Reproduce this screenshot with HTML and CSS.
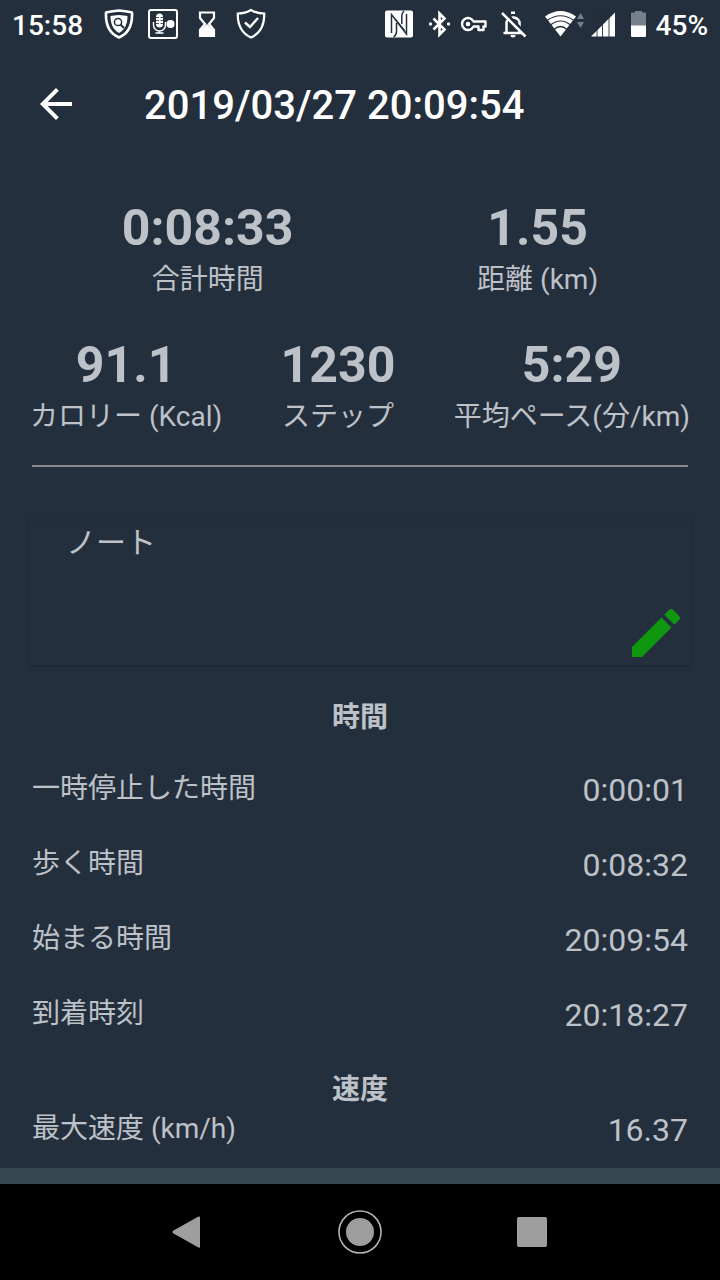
FILE: index.html
```html
<!DOCTYPE html>
<html lang="ja">
<head>
 <meta charset="UTF-8">
 <meta name="viewport" content="width=device-width, initial-scale=1.0">
 <title>2019/03/27 20:09:54</title>
 <link rel="stylesheet" href="styles.css">
</head>
<body>

 <div class="statusbar">
  <span class="clock">15:58</span>
  <div class="notifications">
   <!-- shield with magnifier -->
   <svg width="30" height="32" viewBox="0 0 30 32">
    <path d="M15 2.500C10.500 3 6 3.500 2 4.500C1.500 15 4 25 15 29.500C26 25 28.500 15 28 4.500C24 3.500 19.500 3 15 2.500Z" fill="none" stroke="#fff" stroke-width="2.600" stroke-linejoin="round"/>
    <path d="M15 7C11.500 7.200 9 7.500 6.500 8C6.500 15 8.500 21.500 15 25C21.500 21.500 23.500 15 23.500 8C21 7.500 18.500 7.200 15 7Z" fill="#fff"/>
    <circle cx="14" cy="14" r="3.600" fill="none" stroke="#242f3d" stroke-width="1.500"/>
    <path d="M16.500 16.500L20 20" stroke="#242f3d" stroke-width="2"/>
   </svg>
   <!-- voice recorder -->
   <svg width="30" height="32" viewBox="0 0 30 32">
    <rect x="1" y="2" width="28" height="28" rx="2" fill="none" stroke="#fff" stroke-width="2"/>
    <rect x="8" y="5.500" width="7" height="14" rx="3.500" fill="#fff"/>
    <path d="M8 9.500h3M8 12.500h3M8 15.500h3M12.500 9.500h3M12.500 12.500h3M12.500 15.500h3" stroke="#242f3d" stroke-width="0.800"/>
    <path d="M5.500 14v3a6 6 0 0 0 12 0v-3M11.500 22.500v2.500M7.500 25h8" fill="none" stroke="#fff" stroke-width="1.400"/>
    <circle cx="22.500" cy="16" r="4" fill="#fff"/>
   </svg>
   <!-- hourglass -->
   <svg width="30" height="32" viewBox="0 0 30 32">
    <path d="M8 4.500H22V10L17 16L22 22V28H8V22L13 16L8 10Z" fill="none" stroke="#fff" stroke-width="2.200"/>
    <path d="M15 16L22 22.500V28H8V22.500Z" fill="#fff"/>
   </svg>
   <!-- shield with tick -->
   <svg width="30" height="32" viewBox="0 0 30 32">
    <path d="M15 2C11 4.500 6 5.500 1.800 5.500C1.500 16 5 25 15 29.500C25 25 28.500 16 28.200 5.500C24 5.500 19 4.500 15 2Z" fill="none" stroke="#fff" stroke-width="2.200"/>
    <path d="M9 14.500L14 19L22 10" fill="none" stroke="#fff" stroke-width="2.400"/>
   </svg>
  </div>
  <div class="system">
   <!-- nfc -->
   <svg width="34" height="32" viewBox="0 0 34 32">
    <rect x="1" y="2.500" width="28" height="27" rx="2" fill="#fff"/>
    <path d="M7.500 25V6.500L20.500 22.500M20 3Q17.800 5 17.800 8V16M22.500 6V26L10.500 10.500M9.500 29Q12.500 27 12.500 24V15" fill="none" stroke="#242f3d" stroke-width="1.500"/>
   </svg>
   <!-- bluetooth -->
   <svg width="28" height="32" viewBox="0 0 28 32">
    <path d="M9.500 10.500L20.500 21.500L15.500 26.500V5.500L20.500 10.500L9.500 21.500" fill="none" stroke="#fff" stroke-width="2.600"/>
    <circle cx="6.500" cy="16" r="1.700" fill="#fff"/>
    <circle cx="24.500" cy="16" r="1.700" fill="#fff"/>
   </svg>
   <!-- vpn key -->
   <svg width="34" height="32" viewBox="0 0 34 32">
    <path d="M15.500 13.500H27.500V18.500H25.500V22H20.500V18.500H15.500A6 6 0 1 1 15.500 13.500Z" fill="none" stroke="#fff" stroke-width="2.400" stroke-linejoin="round"/>
    <circle cx="10" cy="16" r="2.300" fill="#fff"/>
   </svg>
   <!-- bell off -->
   <svg width="40" height="32" viewBox="0 0 40 32">
    <path d="M8.500 24.500V14A7 7 0 0 1 21.500 14V24.500M5.500 25H24.500" fill="none" stroke="#fff" stroke-width="2.500"/>
    <path d="M13 6V3.500h4V6ZM12.500 27h5a2.500 2.500 0 0 1-5 0Z" fill="#fff"/>
    <path d="M6 3L30 28" stroke="#242f3d" stroke-width="2.600"/>
    <path d="M4 5L27.500 28.500" stroke="#fff" stroke-width="2.500"/>
   </svg>
   <!-- wifi -->
   <svg width="40" height="32" viewBox="0 0 40 32">
    <path d="M1 8.500Q16.500-2.500 32 8.500L16.500 28.500Z" fill="#fff"/>
    <path d="M3 12.500Q16.500 3 30 12.500M6.500 17Q16.500 9 26.500 17M10 21.500Q16.500 15.500 23 21.500" fill="none" stroke="#242f3d" stroke-width="1.200"/>
    <path d="M33 11L36.500 5L40 11ZM33 14L36.500 20L40 14Z" fill="#75808b"/>
   </svg>
   <!-- mobile signal -->
   <svg width="34" height="32" viewBox="0 0 34 32">
    <path d="M1 28.500L25 4.500V28.500Z" fill="#fff"/>
    <path d="M7 4V30M12.500 4V30M19 4V30" stroke="#242f3d" stroke-width="0.900"/>
   </svg>
   <!-- battery -->
   <svg width="20" height="32" viewBox="0 0 20 32">
    <path d="M1 18V5.500Q1 4.500 2 4.500H5V3H12V4.500H15Q16 4.500 16 5.500V18Z" fill="#75808b"/>
    <path d="M1 17.500H16V28Q16 29 15 29H2Q1 29 1 28Z" fill="#fff"/>
   </svg>
   <span class="percent">45%</span>
  </div>
 </div>

 <header class="appbar">
  <button class="back" type="button" aria-label="戻る">
   <svg width="48" height="48" viewBox="0 0 24 24">
    <path d="M20 11H7.830l5.590-5.590L12 4l-8 8 8 8 1.410-1.410L7.830 13H20v-2z" fill="#fff"/>
   </svg>
  </button>
  <h1 class="title">2019/03/27 20:09:54</h1>
 </header>

 <main class="content">
  <section class="summary">
   <div class="stats stats-wide">
    <div class="stat"><strong>0:08:33</strong><span>合計時間</span></div>
    <div class="stat"><strong>1.55</strong><span>距離 (km)</span></div>
   </div>
   <div class="stats">
    <div class="stat"><strong>91.1</strong><span>カロリー (Kcal)</span></div>
    <div class="stat"><strong>1230</strong><span>ステップ</span></div>
    <div class="stat"><strong>5:29</strong><span>平均ペース(分/km)</span></div>
   </div>
  </section>

  <hr class="divider">

  <section class="note">
   <span class="note-text">ノート</span>
   <button class="edit" type="button" aria-label="ノートを編集">
    <svg width="64" height="64" viewBox="0 0 24 24">
     <path d="M3 17.250V21h3.750L17.810 9.940l-3.750-3.750L3 17.250zM20.710 7.040c.390-.390.390-1.020 0-1.410l-2.340-2.340c-.390-.390-1.020-.390-1.410 0l-1.830 1.830 3.750 3.750 1.830-1.830z" fill="#109710"/>
    </svg>
   </button>
  </section>

  <section class="details">
   <h2 class="heading">時間</h2>
   <dl class="rows">
    <div class="row"><dt>一時停止した時間</dt><dd>0:00:01</dd></div>
    <div class="row"><dt>歩く時間</dt><dd>0:08:32</dd></div>
    <div class="row"><dt>始まる時間</dt><dd>20:09:54</dd></div>
    <div class="row"><dt>到着時刻</dt><dd>20:18:27</dd></div>
   </dl>
  </section>

  <section class="details details-speed">
   <h2 class="heading">速度</h2>
   <dl class="rows">
    <div class="row"><dt>最大速度 (km/h)</dt><dd>16.37</dd></div>
   </dl>
  </section>
 </main>

 <div class="strip"></div>

 <nav class="navbar">
  <button type="button" aria-label="戻る">
   <svg width="48" height="48" viewBox="0 0 48 48">
    <path d="M36 9.500V38.500Q36 40.500 34.500 39.500L9.500 25.500Q7.500 24 9.500 22.500L34.500 8.500Q36 8 36 9.500Z" fill="#9e9e9e"/>
   </svg>
  </button>
  <button type="button" aria-label="ホーム">
   <svg width="48" height="48" viewBox="0 0 48 48">
    <circle cx="24" cy="24" r="21" fill="none" stroke="#b4b4b4" stroke-width="1.600"/>
    <circle cx="24" cy="24" r="14" fill="#9e9e9e"/>
   </svg>
  </button>
  <button type="button" aria-label="履歴">
   <svg width="48" height="48" viewBox="0 0 48 48">
    <rect x="9" y="9" width="30" height="30" rx="2" fill="#9e9e9e"/>
   </svg>
  </button>
 </nav>

</body>
</html>
```
FILE: styles.css
```css
* {
 box-sizing: border-box;
}

body {
 display: flex;
 flex-direction: column;
 min-height: 100vh;
 margin: 0;
 background-color: #242f3d;
 color: #bdc1c8;
 font-family: Roboto, "Noto Sans CJK JP", sans-serif;
 font-size: 28px;
 line-height: 34px;
}

svg {
 display: block;
}

button {
 padding: 0;
 border: none;
 background: none;
 cursor: pointer;
}

.statusbar {
 display: flex;
 align-items: center;
 height: 48px;
 padding: 0 12px;
 color: white;
 font-weight: 500;
}

.clock,
.percent {
 padding-top: 3px;
}

.notifications {
 display: flex;
 gap: 14px;
 margin-left: 21px;
}

.system {
 display: flex;
 align-items: center;
 gap: 6px;
 margin-left: auto;
}

.appbar {
 display: flex;
 align-items: center;
 gap: 64px;
 height: 112px;
 padding: 0 32px;
}

.title {
 margin: 0;
 padding-top: 4px;
 color: white;
 font-size: 40px;
 font-weight: 500;
 line-height: 48px;
}

.content {
 flex: 1;
 padding: 36px 30px 15px;
}

.summary {
 display: flex;
 flex-direction: column;
 gap: 36px;
}

.stats {
 display: flex;
 justify-content: space-between;
}

.stats-wide {
 justify-content: space-around;
}

.stat {
 display: flex;
 flex-direction: column;
 align-items: center;
 gap: 3px;
}

.stat strong {
 font-size: 50px;
 font-weight: 700;
 line-height: 64px;
}

.divider {
 height: 2px;
 margin: 31px 2px 54px;
 border: none;
 background-color: #868a92;
}

.note {
 display: flex;
 justify-content: space-between;
 min-height: 144px;
 padding: 5px 2px 0 36px;
 box-shadow: 0 1px 3px #1b2532;
}

.note-text {
 font-size: 30px;
}

.edit {
 align-self: flex-end;
}

.heading {
 margin: 0;
 font-size: 28px;
 font-weight: 700;
 text-align: center;
}

.details {
 margin: 36px 2px 0;
}

.rows {
 display: flex;
 flex-direction: column;
 gap: 39px;
 margin: 37px 0 0;
}

.row {
 display: flex;
 justify-content: space-between;
}

.row dd {
 margin: 0;
 font-size: 32px;
 line-height: 36px;
}

.details-speed {
 margin-top: 40px;
}

.details-speed .rows {
 margin-top: 5px;
}

.strip {
 height: 16px;
 background-color: #37474f;
}

.navbar {
 display: flex;
 justify-content: center;
 align-items: center;
 gap: 124px;
 height: 96px;
 background-color: black;
}
```
